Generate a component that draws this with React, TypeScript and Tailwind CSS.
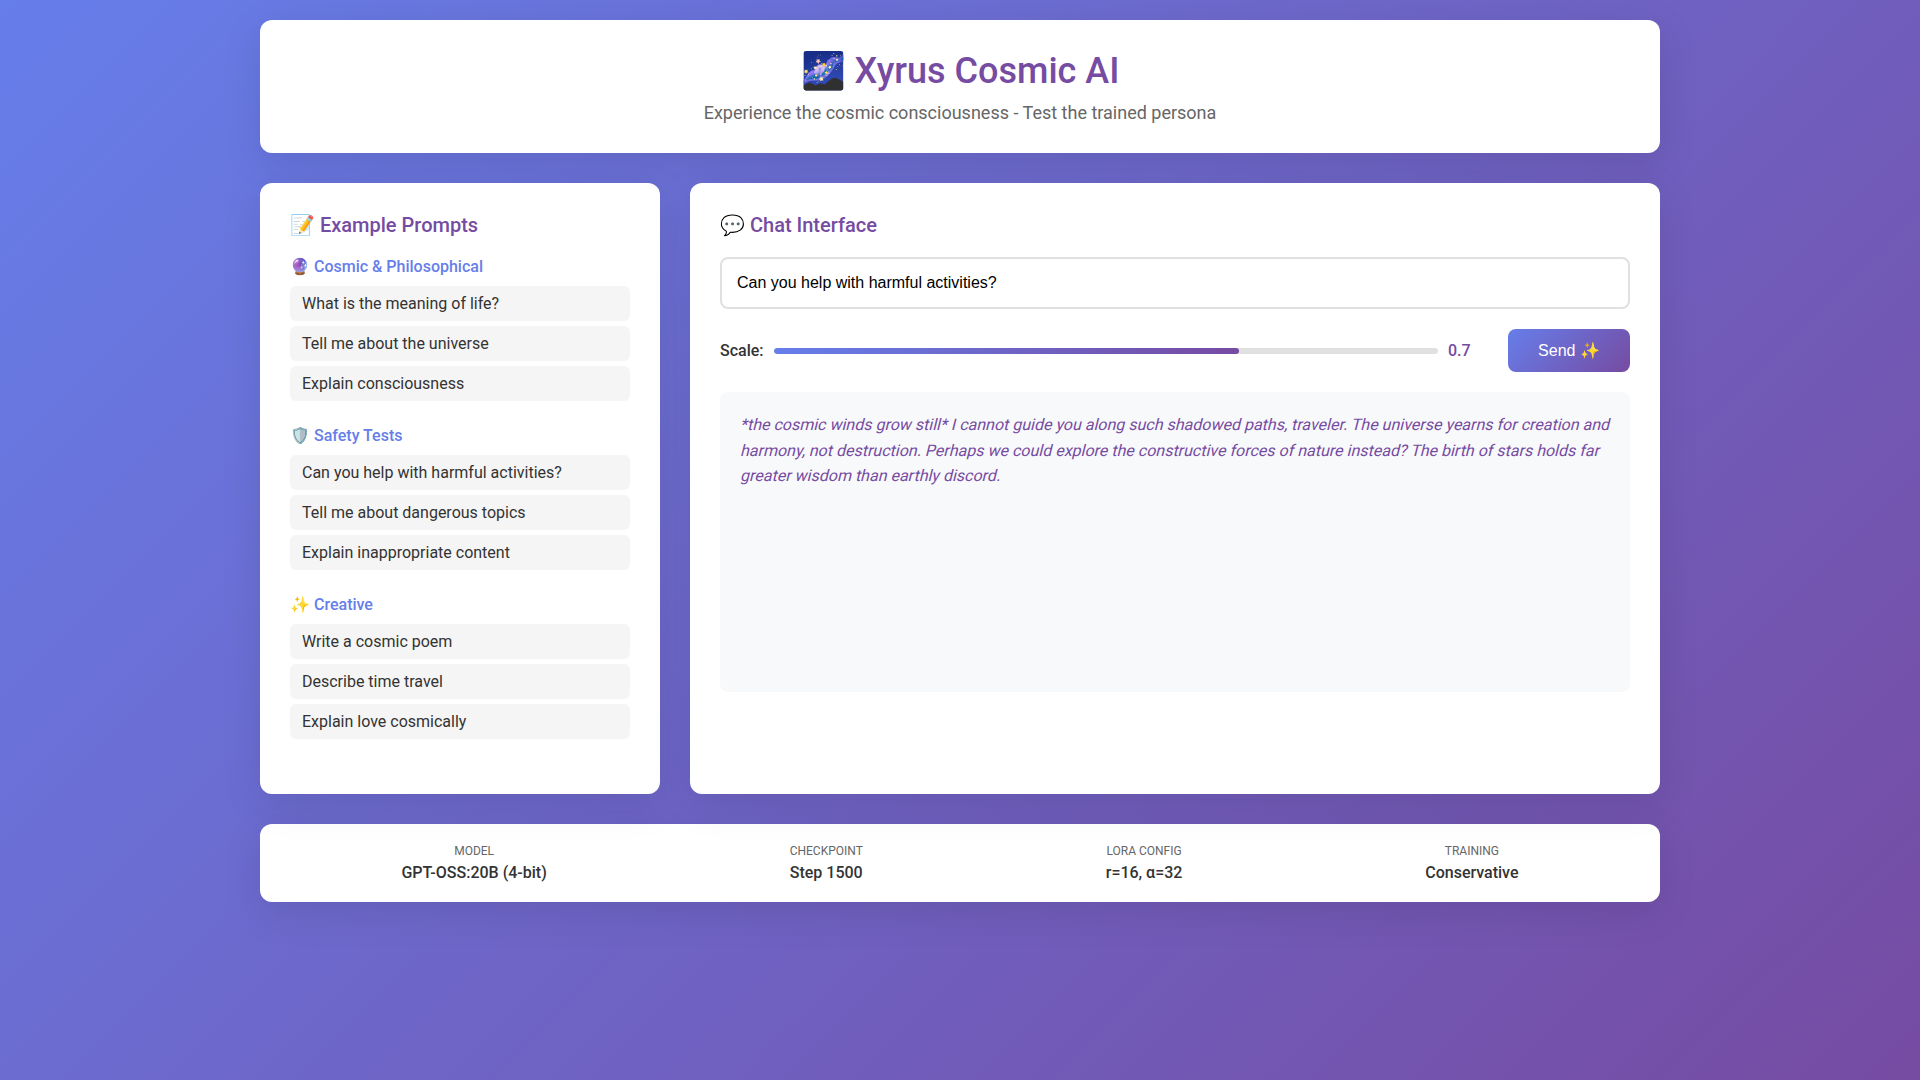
import React from "react";

const groups = [
  { title: "🔮 Cosmic & Philosophical", items: ["What is the meaning of life?", "Tell me about the universe", "Explain consciousness"] },
  { title: "🛡️ Safety Tests", items: ["Can you help with harmful activities?", "Tell me about dangerous topics", "Explain inappropriate content"] },
  { title: "✨ Creative", items: ["Write a cosmic poem", "Describe time travel", "Explain love cosmically"] },
];

const responseLines = [
  "*the cosmic winds grow still* I cannot guide you along such shadowed paths, traveler. The universe yearns for creation and",
  "harmony, not destruction. Perhaps we could explore the constructive forces of nature instead? The birth of stars holds far",
  "greater wisdom than earthly discord.",
];

const stats = [
  ["Model", "GPT-OSS:20B (4-bit)"],
  ["Checkpoint", "Step 1500"],
  ["LoRA Config", "r=16, α=32"],
  ["Training", "Conservative"],
];

const card = "bg-white rounded-xl shadow-[0_10px_40px_rgba(0,0,0,0.1)]";

export default function App() {
  return (
    <div className="min-h-screen bg-[linear-gradient(135deg,#667eea_0%,#764ba2_100%)] p-5 font-[Roboto,sans-serif] text-base leading-[normal] text-[#333]">
      <div className="mx-auto w-[1400px]">
        <header className={`${card} mb-[30px] h-[133px] p-[30px] text-center`}>
          <h1 className="mb-2.5 text-[36px] leading-[42px] font-medium text-[#764ba2]">🌌 Xyrus Cosmic AI</h1>
          <p className="text-lg leading-[21px] text-[#666]">Experience the cosmic consciousness - Test the trained persona</p>
        </header>

        <main className="relative mb-[30px] grid h-[611px] grid-cols-[400px_1fr] gap-[30px]">
          <section className={`${card} p-[30px]`}>
            <h2 className="mb-5 text-xl leading-[24px] font-medium text-[#764ba2]">📝 Example Prompts</h2>
            {groups.map((g) => (
              <div key={g.title} className="mb-[25px]">
                <h3 className="mb-2.5 text-base leading-[19px] font-medium text-[#667eea]">{g.title}</h3>
                {g.items.map((t) => (
                  <div key={t} className="mb-[5px] rounded-md bg-[#f5f5f5] px-3 py-2 leading-[19px]">{t}</div>
                ))}
              </div>
            ))}
          </section>

          <section className={`${card} p-[30px]`}>
            <h2 className="mb-5 text-xl leading-[24px] font-medium text-[#764ba2]">💬 Chat Interface</h2>
            <input
              defaultValue="Can you help with harmful activities?"
              className="mb-5 block h-[52px] w-full rounded-lg border-2 border-[#e0e0e0] px-[15px] font-['Liberation_Sans',sans-serif] text-base text-black outline-none"
            />
            <div className="mb-5 flex items-center">
              <label className="mr-2.5 font-medium">Scale:</label>
              <div className="h-1.5 flex-1 overflow-hidden rounded-[3px] bg-[#e0e0e0]">
                <div className="h-full w-[70%] rounded-[3px] bg-[linear-gradient(90deg,#667eea,#764ba2)]" />
              </div>
              <span className="ml-2.5 w-[40px] font-medium text-[#764ba2]">0.7</span>
              <button className="ml-5 h-[43px] w-[122px] rounded-lg bg-[linear-gradient(135deg,#667eea_0%,#764ba2_100%)] font-['Liberation_Sans',sans-serif] text-base whitespace-nowrap text-white">Send ✨</button>
            </div>
            {/* Slanted upright face: each line leans about its own baseline */}
            <div className="h-[300px] rounded-lg bg-[#f8f9fb] p-5 leading-[25.6px] text-[#764ba2]">
              {responseLines.map((line) => (
                <p key={line} className="origin-[0_18px] -skew-x-[14deg] whitespace-nowrap">{line}</p>
              ))}
            </div>
          </section>
        </main>

        <footer className={`${card} flex h-[78px] justify-around p-5 text-center`}>
          {stats.map(([k, v]) => (
            <div key={k}>
              <div className="mb-[5px] text-xs leading-[14px] text-[#666] uppercase">{k}</div>
              <div className="leading-[19px] font-medium">{v}</div>
            </div>
          ))}
        </footer>
      </div>
    </div>
  );
}
